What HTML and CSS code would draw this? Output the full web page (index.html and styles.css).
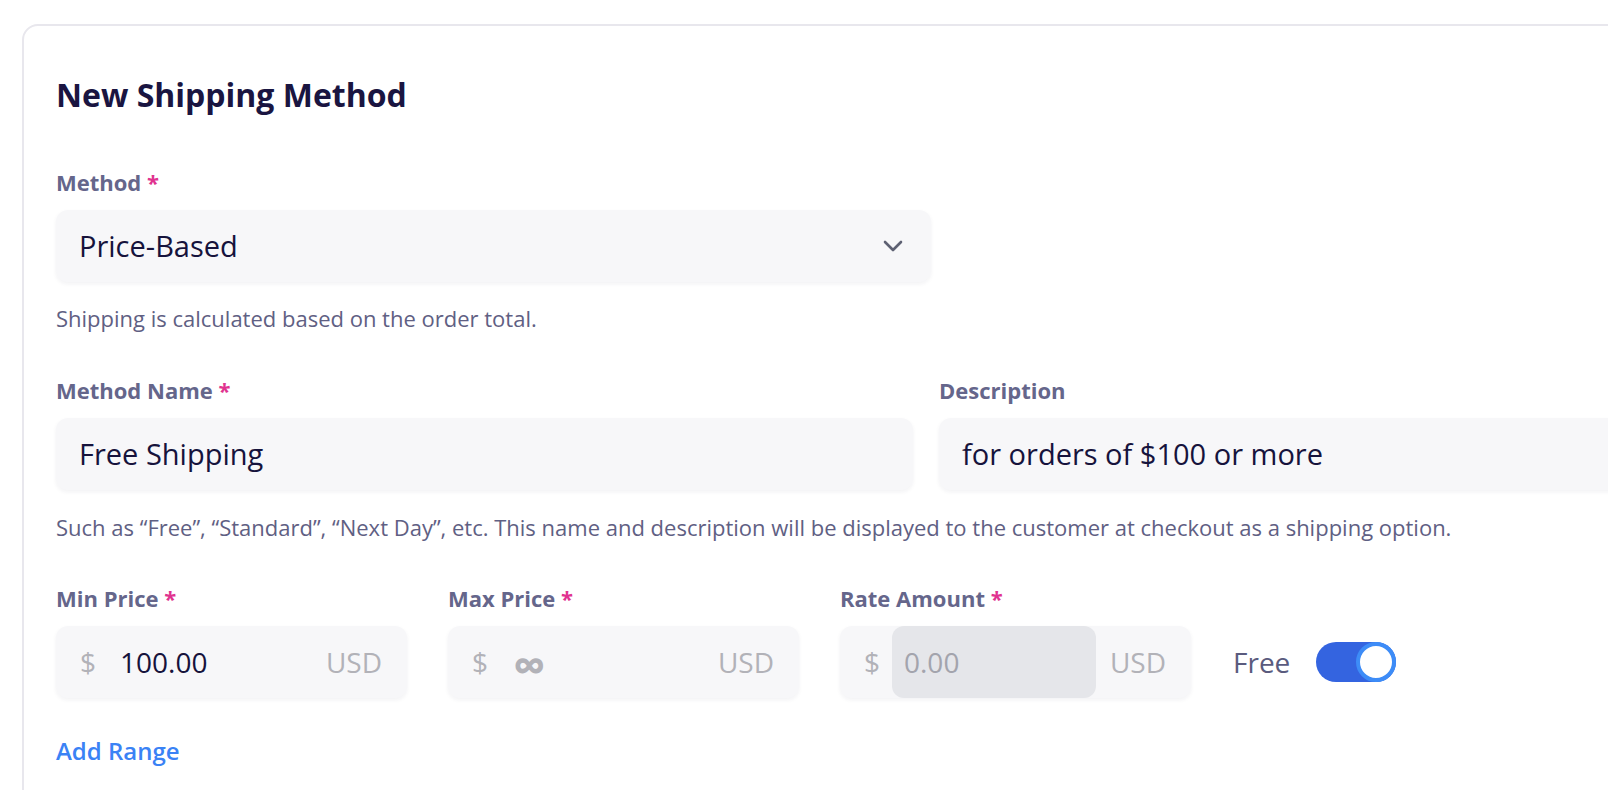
FILE: index.html
```html
<!DOCTYPE html>
<html lang="en">
<head>
<meta charset="utf-8">
<title>New Shipping Method</title>
<link rel="stylesheet" href="styles.css">
</head>
<body>
<div class="page">
  <section class="card">
    <h1 class="title">New Shipping Method</h1>

    <div class="field field-method">
      <label class="label">Method <span class="req">*</span></label>
      <div class="select">
        <span class="select-value">Price-Based</span>
        <svg class="chevron" width="20" height="12" viewBox="0 0 20 12"><polyline points="2,2 10,10 18,2" fill="none" stroke="#5e6173" stroke-width="2.6" stroke-linecap="round" stroke-linejoin="round"/></svg>
      </div>
      <p class="help help-method">Shipping is calculated based on the order total.</p>
    </div>

    <div class="name-grid">
      <div class="field">
        <label class="label">Method Name <span class="req">*</span></label>
        <div class="input"><span class="value">Free Shipping</span></div>
      </div>
      <div class="field">
        <label class="label">Description</label>
        <div class="input"><span class="value">for orders of $100 or more</span></div>
      </div>
    </div>
    <p class="help help-name">Such as “Free”, “Standard”, “Next Day”, etc. This name and description will be displayed to the customer at checkout as a shipping option.</p>

    <div class="price-row">
      <div class="field price-field">
        <label class="label">Min Price <span class="req">*</span></label>
        <div class="money">
          <span class="prefix">$</span>
          <span class="amount">100.00</span>
          <span class="suffix">USD</span>
        </div>
      </div>
      <div class="field price-field">
        <label class="label">Max Price <span class="req">*</span></label>
        <div class="money">
          <span class="prefix">$</span>
          <span class="amount amount-muted"><span class="infinity">∞</span></span>
          <span class="suffix">USD</span>
        </div>
      </div>
      <div class="field price-field">
        <label class="label">Rate Amount <span class="req">*</span></label>
        <div class="money">
          <span class="prefix">$</span>
          <span class="amount amount-disabled">0.00</span>
          <span class="suffix">USD</span>
        </div>
      </div>
      <div class="free">
        <span class="free-label">Free</span>
        <span class="toggle"><span class="knob"></span></span>
      </div>
    </div>

    <a class="add-range" href="#">Add Range</a>
  </section>
</div>
</body>
</html>
```

FILE: styles.css
```css
html, body {
  margin: 0;
  padding: 0;
  background: #ffffff;
  overflow: hidden;
}

body {
  font-family: "Open Sans", "Noto Sans", "Liberation Sans", sans-serif;
  color: #1b1642;
}

.page {
  padding: 24px 0 0 22px;
  width: 1900px;
}

.card {
  width: 1830px;
  border: 2px solid #e8e7ed;
  border-radius: 16px;
  padding: 47px 32px 40px 32px;
  box-sizing: border-box;
  min-height: 900px;
}

.title {
  margin: 0 0 50px 0;
  font-size: 32px;
  line-height: 44px;
  font-weight: 700;
  color: #1a1541;
}

.field {
  display: flex;
  flex-direction: column;
}

.label {
  display: block;
  font-size: 22px;
  line-height: 31px;
  font-weight: 700;
  color: #65668b;
  margin-bottom: 12px;
}

.req {
  color: #e0338f;
}

.select {
  width: 875px;
  height: 72px;
  box-sizing: border-box;
  display: flex;
  align-items: center;
  justify-content: space-between;
  padding: 0 28px 0 23px;
  background: #f7f7f9;
  border-radius: 12px;
  box-shadow: 0 2px 4px rgba(30, 30, 70, 0.06);
}

.select-value,
.value {
  font-size: 29px;
  line-height: 40px;
  color: #16133c;
}

.chevron {
  display: block;
}

.help {
  margin: 21px 0 0 0;
  font-size: 22px;
  line-height: 30px;
  color: #5f6083;
}

.field-method {
  margin-bottom: 42px;
}

.name-grid {
  display: grid;
  grid-template-columns: 857px 857px;
  column-gap: 26px;
}

.input {
  height: 72px;
  box-sizing: border-box;
  display: flex;
  align-items: center;
  padding: 0 24px 0 23px;
  background: #f7f7f9;
  border-radius: 12px;
  box-shadow: 0 2px 4px rgba(30, 30, 70, 0.06);
}

.help-name {
  margin-top: 22px;
  margin-bottom: 41px;
}

.price-row {
  display: flex;
  column-gap: 41px;
  align-items: flex-end;
}

.price-field {
  width: 351px;
}

.money {
  height: 72px;
  display: flex;
  align-items: stretch;
  background: #f7f7f9;
  border-radius: 12px;
  box-shadow: 0 2px 4px rgba(30, 30, 70, 0.06);
  font-size: 28px;
}

.prefix,
.suffix {
  display: flex;
  align-items: center;
  color: #b2b2b8;
}

.prefix {
  padding: 0 12px 0 24px;
  width: 16px;
}

.suffix {
  padding: 0 25px 0 14px;
}

.amount {
  flex: 1;
  display: flex;
  align-items: center;
  padding-left: 12px;
  color: #16133c;
  border-radius: 12px;
}

.amount-muted {
  color: #b2b2b8;
}

.infinity {
  font-size: 46px;
  font-weight: 700;
  line-height: 1;
  margin-top: 4px;
  margin-left: 1px;
}

.amount-disabled {
  background: #e5e6ea;
  color: #a3a4ad;
}

.free {
  height: 72px;
  display: flex;
  align-items: center;
  margin-left: 1px;
}

.free-label {
  font-size: 28px;
  color: #5a5b7e;
  margin-right: 26px;
}

.toggle {
  width: 80px;
  height: 40px;
  border-radius: 20px;
  background: #3464e0;
  display: flex;
  justify-content: flex-end;
  align-items: center;
}

.knob {
  width: 32px;
  height: 32px;
  border-radius: 50%;
  background: #ffffff;
  border: 4px solid #3d8cf7;
}

.add-range {
  display: inline-block;
  margin-top: 37px;
  font-size: 24px;
  line-height: 32px;
  font-weight: 600;
  color: #3a82f5;
  text-decoration: none;
}
```
